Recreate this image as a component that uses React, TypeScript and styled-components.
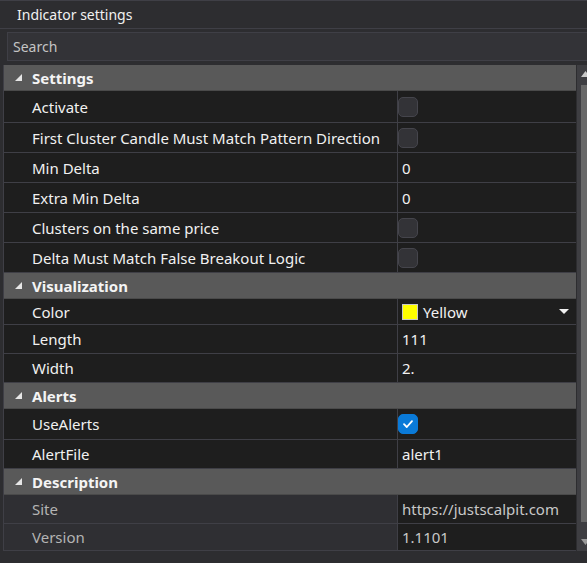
import React from "react"
import styled, { createGlobalStyle } from "styled-components"

const GlobalStyle = createGlobalStyle`
  html, body {
    margin: 0;
    padding: 0;
    background: #2d2d30;
  }
  body {
    font-family: "Noto Sans", "Open Sans", sans-serif;
  }
`

type Row =
  | { kind: "check"; label: string; checked?: boolean; h: number }
  | { kind: "text"; label: string; value: string; h: number; readonly?: boolean }
  | { kind: "color"; label: string; value: string; swatch: string; h: number }

type Group = { title: string; rows: Row[] }

const groups: Group[] = [
  {
    title: "Settings",
    rows: [
      { kind: "check", label: "Activate", h: 32 },
      { kind: "check", label: "First Cluster Candle Must Match Pattern Direction", h: 30 },
      { kind: "text", label: "Min Delta", value: "0", h: 30 },
      { kind: "text", label: "Extra Min Delta", value: "0", h: 30 },
      { kind: "check", label: "Clusters on the same price", h: 30 },
      { kind: "check", label: "Delta Must Match False Breakout Logic", h: 30 },
    ],
  },
  {
    title: "Visualization",
    rows: [
      { kind: "color", label: "Color", value: "Yellow", swatch: "#ffff00", h: 26 },
      { kind: "text", label: "Length", value: "111", h: 29 },
      { kind: "text", label: "Width", value: "2.", h: 29 },
    ],
  },
  {
    title: "Alerts",
    rows: [
      { kind: "check", label: "UseAlerts", checked: true, h: 31 },
      { kind: "text", label: "AlertFile", value: "alert1", h: 29 },
    ],
  },
  {
    title: "Description",
    rows: [
      { kind: "text", label: "Site", value: "https://justscalpit.com", h: 29, readonly: true },
      { kind: "text", label: "Version", value: "1.1101", h: 27, readonly: true },
    ],
  },
]

const App = () => {
  return (
    <>
      <GlobalStyle />
      <Window>
        <TitleBar>Indicator settings</TitleBar>
        <SearchBox>Search</SearchBox>
        <Body>
          <Grid>
            {groups.map((g) => (
              <React.Fragment key={g.title}>
                <Category>
                  <Expander width="8" height="8" viewBox="0 0 8 8">
                    <polygon points="7,0 7,7 0,7" fill="#e6e6e6" />
                  </Expander>
                  {g.title}
                </Category>
                {g.rows.map((r) => (
                  <PropRow key={r.label} $h={r.h}>
                    <Label $readonly={r.kind === "text" && r.readonly}>{r.label}</Label>
                    <Value $readonly={r.kind === "text" && r.readonly}>
                      {r.kind === "check" && (
                        <CheckBox $checked={r.checked}>
                          {r.checked && (
                            <svg width="14" height="14" viewBox="0 0 14 14">
                              <path
                                d="M3 7.2 L5.8 10 L11 4.2"
                                fill="none"
                                stroke="#fff"
                                strokeWidth="1.8"
                                strokeLinecap="round"
                                strokeLinejoin="round"
                              />
                            </svg>
                          )}
                        </CheckBox>
                      )}
                      {r.kind === "text" && r.value}
                      {r.kind === "color" && (
                        <>
                          <Swatch $color={r.swatch} />
                          <ColorName>{r.value}</ColorName>
                          <DropArrow width="10" height="6" viewBox="0 0 10 6">
                            <polygon points="0,0 10,0 5,5" fill="#f0f0f0" />
                          </DropArrow>
                        </>
                      )}
                    </Value>
                  </PropRow>
                ))}
              </React.Fragment>
            ))}
          </Grid>
          <ScrollBar>
            <ScrollArrow width="9" height="6" viewBox="0 0 9 6">
              <polygon points="4.5,0 9,6 0,6" fill="#c8c8c8" />
            </ScrollArrow>
            <Thumb />
            <ScrollArrow width="9" height="6" viewBox="0 0 9 6">
              <polygon points="0,0 9,0 4.5,6" fill="#9a9a9a" />
            </ScrollArrow>
          </ScrollBar>
        </Body>
      </Window>
    </>
  )
}

export default App

const Window = styled.div`
  width: 587px;
  height: 563px;
  overflow: hidden;
  background: #2d2d30;
  color: #f1f1f1;
  font-size: 15px;
  display: flex;
  flex-direction: column;
`

const TitleBar = styled.div`
  height: 29px;
  box-sizing: border-box;
  padding: 0 0 0 17px;
  display: flex;
  align-items: center;
  font-size: 14px;
  color: #f1f1f1;
  border-bottom: 1px solid #3f3f46;
  border-top: 1px solid #3f3f46;
`

const SearchBox = styled.div`
  margin: 3px 0 4px 7px;
  height: 29px;
  box-sizing: border-box;
  border: 1px solid #3f3f46;
  border-right: none;
  background: #333337;
  color: #c4c4c4;
  font-size: 14px;
  padding-left: 5px;
  display: flex;
  align-items: center;
`

const Body = styled.div`
  display: flex;
  width: 593px;
  height: 486px;
  flex: none;
  margin-left: 3px;
  border-left: 1px solid #3f3f46;
`

const Grid = styled.div`
  width: 572px;
  display: flex;
  flex-direction: column;
`

const Category = styled.div`
  height: 26px;
  box-sizing: border-box;
  background: #595959;
  border-bottom: 1px solid #4a4a4a;
  display: flex;
  align-items: center;
  font-weight: 700;
  color: #f4f4f4;
  padding-left: 11px;
  gap: 9px;
`

const Expander = styled.svg`
  flex: none;
  margin-top: 1px;
`

const PropRow = styled.div<{ $h: number }>`
  height: ${(p) => p.$h}px;
  box-sizing: border-box;
  display: grid;
  grid-template-columns: 394px 1fr;
  border-bottom: 1px solid #3f3f46;
  background: #1e1e1e;
`

const Label = styled.div<{ $readonly?: boolean }>`
  display: flex;
  align-items: center;
  padding-left: 28px;
  border-right: 1px solid #3f3f46;
  background: ${(p) => (p.$readonly ? "#2f2f33" : "#1e1e1e")};
  color: ${(p) => (p.$readonly ? "#b4b4b4" : "#f1f1f1")};
  white-space: nowrap;
  overflow: hidden;
`

const Value = styled.div<{ $readonly?: boolean }>`
  display: flex;
  align-items: center;
  padding-left: 4px;
  padding-right: 8px;
  color: ${(p) => (p.$readonly ? "#c8c8c8" : "#f1f1f1")};
  white-space: nowrap;
  overflow: hidden;
`

const CheckBox = styled.div<{ $checked?: boolean }>`
  width: 20px;
  height: 20px;
  box-sizing: border-box;
  border-radius: 5px;
  margin-left: -4px;
  background: ${(p) => (p.$checked ? "#0a7ad8" : "#333337")};
  border: 1px solid ${(p) => (p.$checked ? "#0a7ad8" : "#45454c")};
  display: flex;
  align-items: center;
  justify-content: center;
`

const Swatch = styled.div<{ $color: string }>`
  width: 16px;
  height: 16px;
  box-sizing: border-box;
  background: ${(p) => p.$color};
  border: 1px solid #c8c8c8;
  flex: none;
`

const ColorName = styled.span`
  margin-left: 5px;
  flex: 1;
`

const DropArrow = styled.svg`
  flex: none;
  margin-right: -1px;
`

const ScrollBar = styled.div`
  width: 17px;
  background: #3e3e42;
  border-left: 1px solid #2d2d30;
  box-sizing: border-box;
  display: flex;
  flex-direction: column;
  align-items: center;
  padding: 6px 0 6px;
  gap: 8px;
`

const ScrollArrow = styled.svg`
  flex: none;
`

const Thumb = styled.div`
  width: 9px;
  flex: 1;
  margin: 0 0 9px;
  background: #686868;
`
